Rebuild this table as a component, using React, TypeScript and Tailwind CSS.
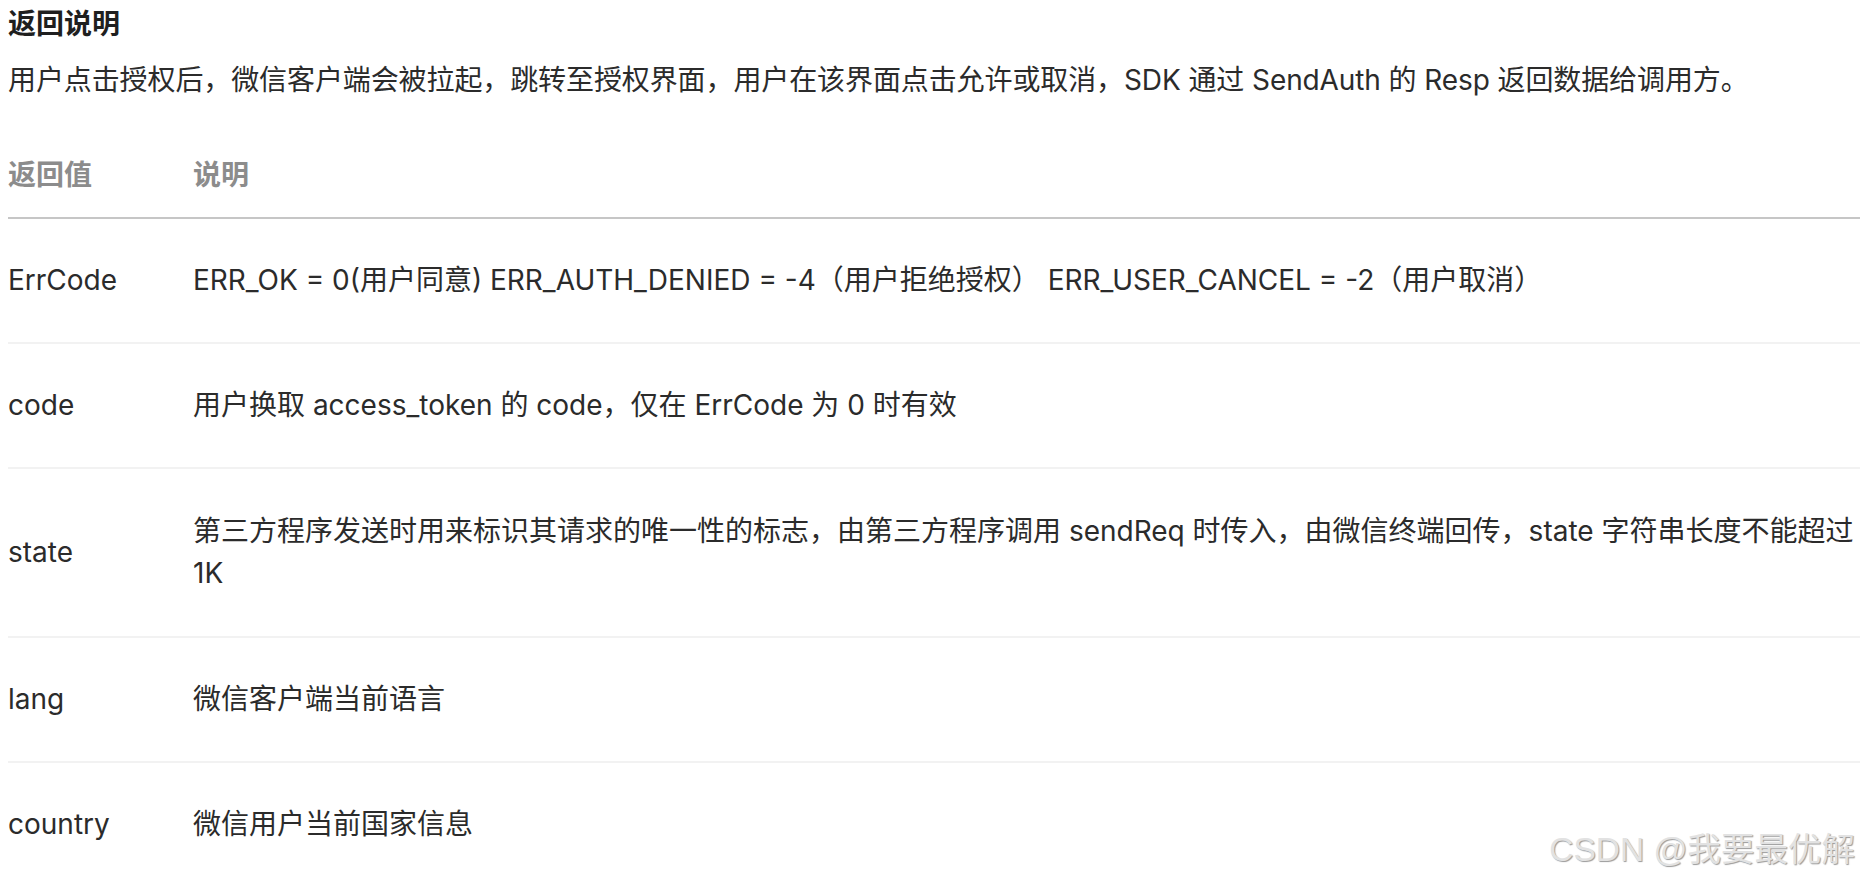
import React from "react";

const rows: { key: string; desc: React.ReactNode; multi?: boolean }[] = [
  {
    key: "ErrCode",
    desc: "ERR_OK = 0(用户同意) ERR_AUTH_DENIED = -4（用户拒绝授权） ERR_USER_CANCEL = -2（用户取消）",
  },
  { key: "code", desc: "用户换取 access_token 的 code，仅在 ErrCode 为 0 时有效" },
  {
    key: "state",
    desc: (
      <>
        第三方程序发送时用来标识其请求的唯一性的标志，由第三方程序调用 sendReq 时传入，由微信终端回传，state 字符串长度不能超过
        <br />
        1K
      </>
    ),
    multi: true,
  },
  { key: "lang", desc: "微信客户端当前语言" },
  { key: "country", desc: "微信用户当前国家信息" },
];

export default function App() {
  return (
    <div className="relative min-h-[882px] w-[1860px] overflow-hidden bg-white font-[Inter,'Noto_Sans_CJK_SC',sans-serif] text-[28px] leading-[42.7px] text-[#2b2b2b]">
      <div className="flex flex-col pl-[8px]">
        <h2 className="mt-[3px] font-bold text-[#1f1f1f]">返回说明</h2>
        <p className="mt-[13px] tracking-[-0.1px]">
          用户点击授权后，微信客户端会被拉起，跳转至授权界面，用户在该界面点击允许或取消，SDK 通过 SendAuth 的 Resp 返回数据给调用方。
        </p>
        <table className="mt-[33px] w-full border-collapse">
          <thead>
            <tr className="border-b-2 border-[#c6c6c6]">
              <th className="w-[185px] pt-[20px] pb-[20px] text-left font-semibold text-[#8c8c8c]">返回值</th>
              <th className="pt-[20px] pb-[20px] text-left font-semibold text-[#8c8c8c]">说明</th>
            </tr>
          </thead>
          <tbody>
            {rows.map((r) => (
              <tr key={r.key} className="border-b-2 border-[#f2f2f2]">
                <td className="py-[40px] align-middle">{r.key}</td>
                <td className={r.multi ? "py-[41px] align-middle whitespace-nowrap" : "py-[40px] align-middle"}>
                  {r.desc}
                </td>
              </tr>
            ))}
          </tbody>
        </table>
      </div>
      <div className="pointer-events-none absolute right-[5px] top-[826px] text-[33.5px] leading-[47px] text-[#e2e2e2] [text-shadow:1px_1px_1px_#9a9a9a,-1px_-1px_0_#ffffff] font-[Arial,'Liberation_Sans','Noto_Sans_CJK_SC',sans-serif]">
        CSDN @我要最优解
      </div>
    </div>
  );
}
